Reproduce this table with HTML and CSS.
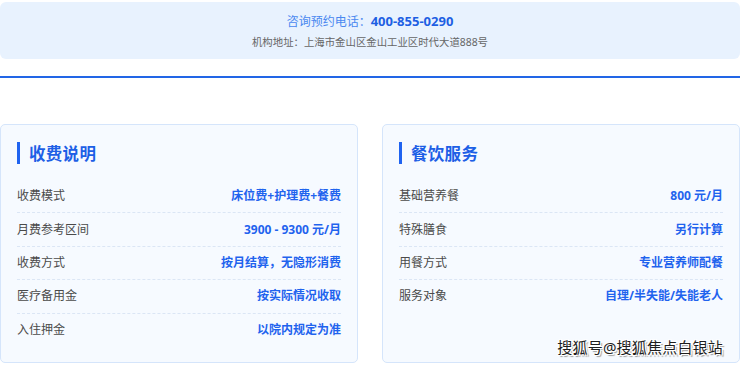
FILE: index.html
```html
<!DOCTYPE html>
<html lang="zh-CN">
<head>
<meta charset="utf-8">
<title>收费说明</title>
<link rel="stylesheet" href="styles.css">
</head>
<body>
<div class="page">
  <div class="banner">
    <p class="phone">咨询预约电话：<strong>400-855-0290</strong></p>
    <p class="address">机构地址：上海市金山区金山工业区时代大道888号</p>
  </div>
  <div class="divider"></div>
  <div class="cards">
    <section class="card">
      <h2 class="card-title">收费说明</h2>
      <ul class="rows">
        <li class="row"><span class="label">收费模式</span><span class="value">床位费+护理费+餐费</span></li>
        <li class="row"><span class="label">月费参考区间</span><span class="value">3900 - 9300 元/月</span></li>
        <li class="row"><span class="label">收费方式</span><span class="value">按月结算，无隐形消费</span></li>
        <li class="row"><span class="label">医疗备用金</span><span class="value">按实际情况收取</span></li>
        <li class="row"><span class="label">入住押金</span><span class="value">以院内规定为准</span></li>
      </ul>
    </section>
    <section class="card">
      <h2 class="card-title">餐饮服务</h2>
      <ul class="rows">
        <li class="row"><span class="label">基础营养餐</span><span class="value">800 元/月</span></li>
        <li class="row"><span class="label">特殊膳食</span><span class="value">另行计算</span></li>
        <li class="row"><span class="label">用餐方式</span><span class="value">专业营养师配餐</span></li>
        <li class="row"><span class="label">服务对象</span><span class="value">自理/半失能/失能老人</span></li>
      </ul>
    </section>
  </div>
  <div class="watermark">搜狐号@搜狐焦点白银站</div>
</div>
</body>
</html>
```
FILE: styles.css
```css
* { box-sizing: border-box; }
html, body { margin: 0; padding: 0; background: #ffffff; }
body {
  font-family: "Noto Sans", "Noto Sans CJK SC", sans-serif;
  color: #444;
}
.page {
  position: relative;
  width: 740px;
  height: 365px;
  overflow: hidden;
  padding-top: 2px;
}
.banner {
  height: 57px;
  background: #e8f2fe;
  border-radius: 6px;
  display: flex;
  flex-direction: column;
  align-items: center;
  padding-top: 10px;
}
.banner p { margin: 0; }
.phone {
  font-size: 12px;
  line-height: 18px;
  color: #4a88f0;
}
.phone strong {
  font-size: 13px;
  font-weight: 700;
  color: #1e5fe3;
}
.address {
  margin-top: 4px !important;
  font-size: 10.4px;
  line-height: 14px;
  color: #666;
}
.divider {
  margin-top: 17px;
  height: 2px;
  background: #2266e6;
}
.cards {
  margin-top: 46px;
  display: grid;
  grid-template-columns: 358px 358px;
  column-gap: 24px;
}
.card {
  background: #f6faff;
  border: 1px solid #d5e5fb;
  border-radius: 5px;
  padding: 17px 16px 16px;
}
.card-title {
  margin: 0 0 16px;
  height: 22px;
  display: flex;
  align-items: center;
  border-left: 3px solid #1f63f0;
  padding-left: 9px;
  font-size: 16.5px;
  font-weight: 700;
  color: #1d5fe6;
  letter-spacing: 0.3px;
}
.rows {
  list-style: none;
  margin: 0;
  padding: 0;
}
.row {
  display: flex;
  justify-content: space-between;
  align-items: center;
  padding: 8.2px 0;
  line-height: 16px;
  font-size: 12px;
  border-bottom: 1px dashed #dbe6f5;
}
.row:last-child { border-bottom: none; }
.label { color: #4a4a4a; }
.value { color: #1f63ee; font-weight: 700; }
.watermark {
  position: absolute;
  right: 17px;
  bottom: 8px;
  font-size: 15px;
  line-height: 20px;
  color: #1e1e1e;
  text-shadow: 1px 1px 0 #fff, -1px -1px 0 #fff, 1px -1px 0 #fff, -1px 1px 0 #fff, 2px 2px 1px #999;
  letter-spacing: 0.2px;
}
```
